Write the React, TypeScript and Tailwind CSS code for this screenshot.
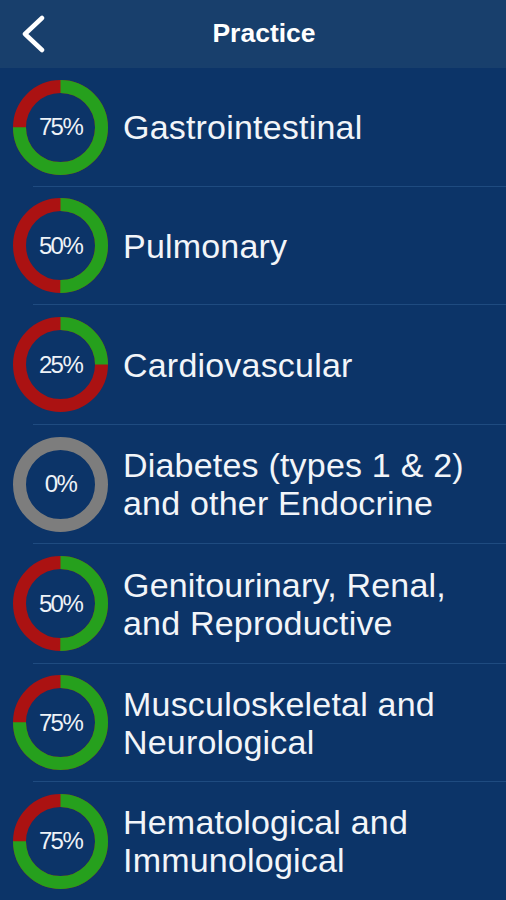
import React from "react";

const rows: { pct: number; label: string[]; h: number }[] = [
  { pct: 75, label: ["Gastrointestinal"], h: 118 },
  { pct: 50, label: ["Pulmonary"], h: 117 },
  { pct: 25, label: ["Cardiovascular"], h: 119 },
  { pct: 0, label: ["Diabetes (types 1 & 2)", "and other Endocrine"], h: 118 },
  { pct: 50, label: ["Genitourinary, Renal,", "and Reproductive"], h: 119 },
  { pct: 75, label: ["Musculoskeletal and", "Neurological"], h: 117 },
  { pct: 75, label: ["Hematological and", "Immunological"], h: 118 },
];

function Donut({ pct }: { pct: number }) {
  const r = 41;
  const c = 2 * Math.PI * r;
  const green = (pct / 100) * c;
  return (
    <div className="relative w-[95px] h-[95px] shrink-0">
      <svg width="95" height="95" viewBox="0 0 95 95">
        {pct === 0 ? (
          <circle cx="47.5" cy="47.5" r={r} fill="none" stroke="#7d7d7d" strokeWidth="13" />
        ) : (
          <g transform="rotate(-90 47.5 47.5)">
            <circle cx="47.5" cy="47.5" r={r} fill="none" stroke="#ab1212" strokeWidth="13" />
            <circle
              cx="47.5"
              cy="47.5"
              r={r}
              fill="none"
              stroke="#26a01d"
              strokeWidth="13"
              strokeDasharray={`${green} ${c}`}
            />
          </g>
        )}
      </svg>
      <div className="absolute inset-0 flex items-center justify-center text-[24px] tracking-[-1.6px] text-[#eef2f7] font-['Liberation_Sans',Arial,sans-serif]">
        {pct}%
      </div>
    </div>
  );
}

export default function App() {
  return (
    <div className="w-[506px] h-[900px] overflow-hidden bg-[#0c3468] font-['Liberation_Sans',Arial,sans-serif]">
      <div className="h-[68px] bg-[#183f6c] flex items-center">
        <div className="w-[64px] h-full flex items-center pl-[20px]">
          <svg width="26" height="38" viewBox="0 0 26 38">
            <path d="M22 3 L5 19 L22 35" fill="none" stroke="white" strokeWidth="4.5" strokeLinecap="round" strokeLinejoin="round" />
          </svg>
        </div>
        <div className="flex-1 text-center text-white font-bold text-[26.5px] mr-[42px]">Practice</div>
      </div>
      {rows.map((r, i) => (
        <div key={i} className="flex flex-col">
          <div className="flex items-center pl-[13px]" style={{ height: r.h }}>
            <Donut pct={r.pct} />
            <div className="ml-[15px] text-[#f2f5f9] text-[34px] leading-[38px] tracking-[0.2px]">
              {r.label.map((l, j) => (
                <div key={j}>{l}</div>
              ))}
            </div>
          </div>
          <div className="ml-[33px] h-px bg-[#1f4b80]" />
        </div>
      ))}
    </div>
  );
}
